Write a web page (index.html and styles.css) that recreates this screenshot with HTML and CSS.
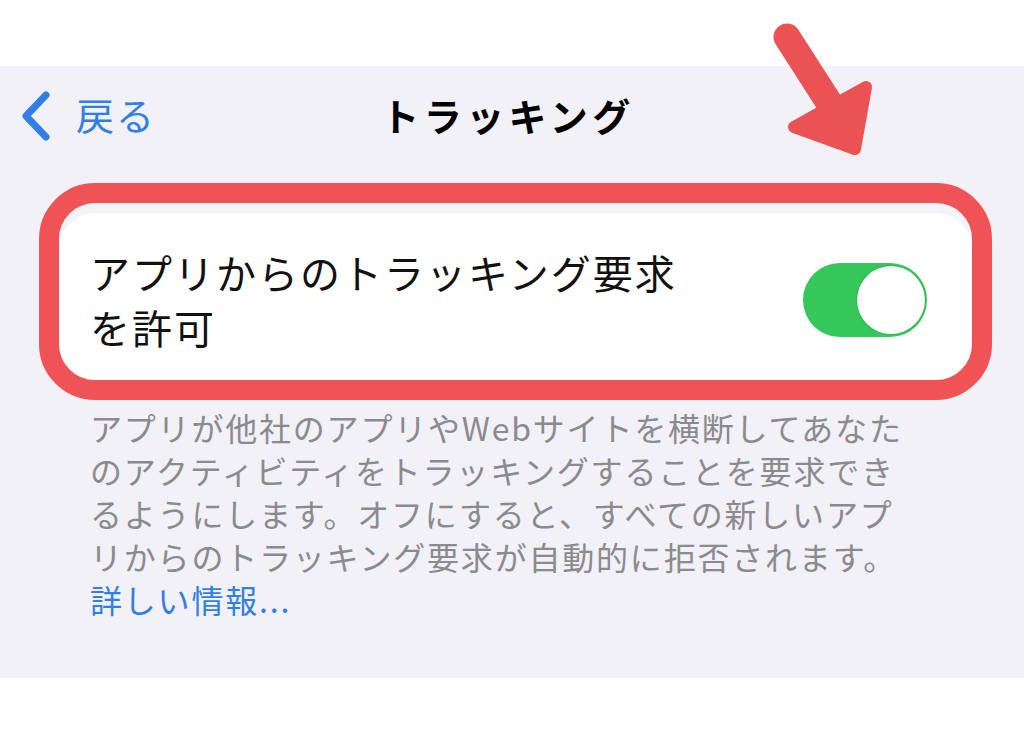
FILE: index.html
```html
<!DOCTYPE html>
<html lang="ja">
<head>
<meta charset="utf-8">
<title>トラッキング</title>
<link rel="stylesheet" href="styles.css">
</head>
<body>
<div class="topbar"></div>
<main class="panel">
  <header class="nav">
    <div class="back">
      <svg class="chev" width="32" height="50" viewBox="0 0 32 50"><path d="M27 4 L7 25 L27 46" fill="none" stroke="#2f7fe6" stroke-width="7" stroke-linecap="round" stroke-linejoin="round"/></svg>
      <span class="back-label">戻る</span>
    </div>
    <h1 class="title">トラッキング</h1>
    <div class="spacer"></div>
  </header>
  <section class="highlight">
    <div class="cell">
      <div class="cell-label">アプリからのトラッキング要求<br>を許可</div>
      <div class="toggle"><div class="knob"></div></div>
    </div>
  </section>
  <p class="footer">アプリが他社のアプリやWebサイトを横断してあなた<br>のアクティビティをトラッキングすることを要求でき<br>るようにします。オフにすると、すべての新しいアプ<br>リからのトラッキング要求が自動的に拒否されます。<br><span class="link">詳しい情報...</span></p>
</main>
<svg class="arrow" width="1024" height="200" viewBox="0 0 1024 200">
  <line x1="787" y1="37" x2="830" y2="104" stroke="#eb5254" stroke-width="27" stroke-linecap="round"/>
  <polygon points="794,127 866,87 855,149" fill="#eb5254" stroke="#eb5254" stroke-width="12" stroke-linejoin="round"/>
</svg>
</body>
</html>
```
FILE: styles.css
```css
html, body {
  margin: 0;
  padding: 0;
  background: #ffffff;
  font-family: "Noto Sans CJK JP", "Noto Sans", sans-serif;
}
.topbar {
  height: 66px;
  background: #ffffff;
}
.panel {
  height: 612px;
  background: #f2f1f7;
  overflow: hidden;
}
.nav {
  height: 100px;
  display: grid;
  grid-template-columns: 1fr auto 1fr;
  align-items: center;
  padding-right: 8px;
}
.back {
  display: flex;
  align-items: center;
  padding-left: 19px;
}
.chev {
  display: block;
}
.back-label {
  margin-left: 25px;
  font-size: 38px;
  line-height: 42px;
  color: #2f7fe6;
  letter-spacing: 2px;
  margin-top: -4px;
}
.title {
  margin: 0;
  font-size: 38px;
  line-height: 44px;
  font-weight: 700;
  color: #000;
  letter-spacing: 4.4px;
  margin-top: -2px;
}
.highlight {
  margin: 17px 0 0 39px;
  width: 953px;
  height: 217px;
  box-sizing: border-box;
  border: 20px solid #f05356;
  border-radius: 56px;
  background: #ffffff;
  box-shadow: inset 0 10px 0 #f4f3f8;
  overflow: hidden;
}
.cell {
  height: 100%;
  display: flex;
  align-items: center;
  justify-content: space-between;
  padding: 16px 45px 0 31px;
  box-sizing: border-box;
}
.cell-label {
  font-size: 40px;
  line-height: 55px;
  letter-spacing: 2px;
  color: #111;
  white-space: nowrap;
}
.toggle {
  width: 124px;
  height: 74px;
  border-radius: 37px;
  background: #35c759;
  display: flex;
  align-items: center;
  justify-content: flex-end;
  padding: 0 2px;
  box-sizing: border-box;
}
.knob {
  width: 68px;
  height: 68px;
  border-radius: 50%;
  background: #ffffff;
  box-shadow: 0 0 0 1px #2fb552;
}
.footer {
  margin: 6px 0 0 90px;
  font-size: 32px;
  line-height: 43px;
  letter-spacing: 1.8px;
  color: #8a8a8f;
  white-space: nowrap;
}
.link {
  color: #2f7fe6;
}
.arrow {
  position: absolute;
  left: 0;
  top: 0;
  pointer-events: none;
}
```
